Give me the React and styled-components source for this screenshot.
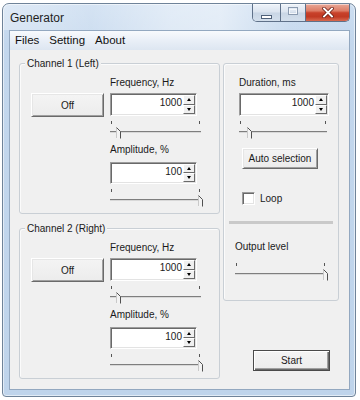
import React from "react";
import styled, { createGlobalStyle } from "styled-components";

const Global = createGlobalStyle`
  html, body { margin: 0; padding: 0; background: #ffffff; }
  body { font-family: "Liberation Sans", Arial, sans-serif; color: #1a1a1a; }
  #root { width: 360px; height: 400px; overflow: hidden; }
  * { box-sizing: border-box; }
`;

const Window = styled.div`
  margin: 3px 0 0 2px;
  width: 354px;
  height: 394px;
  border: 1px solid #6f8399;
  border-radius: 7px 7px 4px 4px;
  background: linear-gradient(180deg, #cddef1 0px, #c3d7ed 40px, #bfd4eb 100%);
  box-shadow: inset 0 0 0 1px rgba(255, 255, 255, 0.55);
  padding: 0 5px 6px 6px;
  display: flex;
  flex-direction: column;
`;

const TitleBar = styled.div`
  margin: 0 -5px 0 -6px;
  height: 26px;
  padding: 0 5px 0 7px;
  border-radius: 6px 6px 0 0;
  display: flex;
  justify-content: space-between;
  align-items: flex-start;
  background: linear-gradient(
    90deg,
    rgba(255, 255, 255, 0.35) 0%,
    rgba(255, 255, 255, 0.15) 25%,
    rgba(255, 255, 255, 0.45) 48%,
    rgba(255, 255, 255, 0.5) 62%,
    rgba(255, 255, 255, 0.05) 82%,
    rgba(255, 255, 255, 0) 100%
  );
`;

const Title = styled.div`
  margin-top: 7px;
  font-size: 12px;
  line-height: 15px;
  color: #1e1e1e;
`;

const WinButtons = styled.div`
  display: flex;
  height: 18px;
  border: 1px solid #5f7189;
  border-top: none;
  border-radius: 0 0 5px 5px;
  overflow: hidden;
`;

const WinBtn = styled.div`
  width: ${(p) => p.$w}px;
  height: 100%;
  display: flex;
  align-items: center;
  justify-content: center;
  border-left: ${(p) => (p.$first ? "none" : "1px solid #5f7189")};
  background: ${(p) =>
    p.$close
      ? "linear-gradient(180deg, #e9a898 0%, #dd7d66 40%, #c8412a 52%, #c13a23 75%, #d8694f 100%)"
      : "linear-gradient(180deg, #eef3f9 0%, #dbe4ef 48%, #c9d6e5 52%, #d3dfec 100%)"};
  box-shadow: inset 0 1px 0 rgba(255, 255, 255, 0.5);
`;

const MinIcon = () => (
  <svg width="12" height="6" viewBox="0 0 12 6" style={{ marginTop: 8 }}>
    <rect x="0.5" y="1.5" width="10" height="3" fill="#ffffff" stroke="#4f6179" />
  </svg>
);

const MaxIcon = () => (
  <svg width="11" height="9" viewBox="0 0 11 9" style={{ marginTop: -2 }}>
    <rect x="0.5" y="0.5" width="9" height="7" fill="none" stroke="#8b9bb0" />
    <rect x="1.5" y="2.5" width="7" height="4" fill="none" stroke="#f4f7fb" />
  </svg>
);

const CloseIcon = () => (
  <svg width="12" height="11" viewBox="0 0 12 11">
    <path d="M2 1.5 L10 9.5 M10 1.5 L2 9.5" stroke="#6b1c12" strokeWidth="3.4" strokeLinecap="square" />
    <path d="M2 1.5 L10 9.5 M10 1.5 L2 9.5" stroke="#ffffff" strokeWidth="1.9" strokeLinecap="square" />
  </svg>
);

const Client = styled.div`
  flex: 1;
  display: flex;
  flex-direction: column;
  border: 1px solid #93a8c0;
  background: #f0f0f0;
`;

const MenuBar = styled.div`
  height: 19px;
  display: flex;
  align-items: center;
  background: linear-gradient(180deg, #f8fafd 0%, #e9eff7 50%, #dde6f1 100%);
`;

const MenuItem = styled.span`
  padding: 0 5px;
  font-size: 11.5px;
  line-height: 15px;
  color: #111;
`;

const Body = styled.div`
  padding: 13px 0 0 9px;
  display: grid;
  grid-template-columns: 201px 116px;
  column-gap: 3px;
  align-items: start;
`;

const Column = styled.div`
  display: flex;
  flex-direction: column;
  align-items: flex-start;
  gap: ${(p) => p.$gap || 0}px;
`;

const Group = styled.div`
  position: relative;
  width: 100%;
  height: ${(p) => p.$h}px;
  border: 1px solid #c9cfd5;
  border-radius: 3px;
  box-shadow: inset 1px 1px 0 rgba(255, 255, 255, 0.7);
`;

const GroupLabel = styled.span`
  position: absolute;
  top: -7px;
  left: 5px;
  padding: 0 2px;
  background: #f0f0f0;
  font-size: 10px;
  line-height: 13px;
`;

const ChannelGroup = styled(Group)`
  display: flex;
  align-items: flex-start;
  gap: 6px;
  padding: 12px 0 0 11px;
`;

const RightGroup = styled(Group)`
  display: flex;
  flex-direction: column;
  align-items: flex-start;
`;

const Section = styled.div`
  display: flex;
  flex-direction: column;
  align-items: flex-start;
  margin: ${(p) => p.$mt || 0}px 0 0 ${(p) => p.$ml || 0}px;
`;

const FieldLabel = styled.div`
  font-size: 10px;
  line-height: 13px;
  height: 13px;
  margin: ${(p) => p.$mt || 0}px 0 ${(p) => p.$mb || 0}px 0;
  white-space: nowrap;
`;

const Button = styled.div`
  width: ${(p) => p.$w}px;
  height: ${(p) => p.$h}px;
  margin: ${(p) => p.$m || "0"};
  display: flex;
  align-items: center;
  justify-content: center;
  font-size: 10px;
  line-height: 13px;
  background: linear-gradient(180deg, #f4f4f4 0%, #ececec 100%);
  border: 1px solid;
  border-color: ${(p) => (p.$default ? "#4a4a4a" : "#ffffff #6a6a6a #6a6a6a #ffffff")};
  box-shadow: ${(p) =>
    p.$default
      ? "inset 1px 1px 0 #ffffff, inset -1px -1px 0 #6a6a6a, inset -2px -2px 0 #a0a0a0"
      : "inset 1px 1px 0 #e6e6e6, inset -1px -1px 0 #a0a0a0"};
  white-space: nowrap;
`;

const SpinBox = styled.div`
  width: ${(p) => p.$w}px;
  height: ${(p) => p.$h}px;
  display: flex;
  background: #ffffff;
  border: 1px solid;
  border-color: #9c9c9c #ffffff #ffffff #9c9c9c;
  box-shadow: inset 1px 1px 0 #696969, inset -1px -1px 0 #e3e3e3;
`;

const SpinText = styled.div`
  flex: 1;
  text-align: right;
  padding: 2px 1px 0 0;
  font-size: 10px;
  line-height: 13px;
`;

const SpinButtons = styled.div`
  width: 13px;
  display: flex;
  flex-direction: column;
  padding: 1px 1px 1px 0;
`;

const SpinBtn = styled.div`
  flex: 1;
  display: flex;
  align-items: center;
  justify-content: center;
  background: #f0f0f0;
  border: 1px solid;
  border-color: #ffffff #6a6a6a #6a6a6a #ffffff;
`;

const Arrow = styled.span`
  width: 0;
  height: 0;
  border-left: 2.5px solid transparent;
  border-right: 2.5px solid transparent;
  ${(p) => (p.$up ? "border-bottom: 3px solid #000;" : "border-top: 3px solid #000;")}
`;

const SliderWrap = styled.div`
  position: relative;
  width: ${(p) => p.$w}px;
  height: 22px;
`;

const TickRow = styled.div`
  display: flex;
  justify-content: space-between;
  margin-top: 5px;
  padding: 0 3px 0 1px;
  height: 3px;
`;

const Tick = styled.span`
  width: 1px;
  height: 3px;
  background: #555;
`;

const Track = styled.div`
  margin-top: 7px;
  width: calc(100% - 2px);
  height: 2px;
  border-top: 1px solid #7e7e7e;
  border-bottom: 1px solid #d8d8d8;
`;

const ThumbBox = styled.div`
  position: absolute;
  top: 9px;
  width: 6px;
  height: 12px;
`;

const Thumb = ({ left }) => (
  <ThumbBox style={{ left }}>
    <svg width="6" height="12" viewBox="0 0 6 12">
      <path d="M0.5 0.5 L4.5 4.5 L4.5 11.5 L0.5 11.5 Z" fill="#f3f3f3" />
      <path d="M0.5 0.5 L4.5 4.5 L4.5 11.5" fill="none" stroke="#505050" strokeWidth="1" />
      <path d="M0.5 1 L0.5 11" stroke="#c9c9c9" strokeWidth="1" />
    </svg>
  </ThumbBox>
);

const Slider = ({ w, value, min, max }) => {
  const left = Math.round(((value - min) / (max - min)) * (w - 5));
  return (
    <SliderWrap $w={w}>
      <TickRow>
        <Tick />
        <Tick />
      </TickRow>
      <Track />
      <Thumb left={left} />
    </SliderWrap>
  );
};

const Spin = ({ w, h, value }) => (
  <SpinBox $w={w} $h={h}>
    <SpinText>{value}</SpinText>
    <SpinButtons>
      <SpinBtn>
        <Arrow $up />
      </SpinBtn>
      <SpinBtn>
        <Arrow />
      </SpinBtn>
    </SpinButtons>
  </SpinBox>
);

const CheckRow = styled.div`
  display: flex;
  align-items: center;
  gap: 5px;
  margin: ${(p) => p.$mt}px 0 0 ${(p) => p.$ml}px;
  font-size: 10px;
  line-height: 13px;
`;

const CheckBox = styled.span`
  width: 13px;
  height: 13px;
  background: #ffffff;
  border: 1px solid;
  border-color: #9c9c9c #ffffff #ffffff #9c9c9c;
  box-shadow: inset 1px 1px 0 #696969, inset -1px -1px 0 #e3e3e3;
`;

const Separator = styled.div`
  width: 104px;
  height: 3px;
  margin: 16px 0 0 5px;
  background: #c9c9c9;
`;

const Channel = ({ label }) => (
  <ChannelGroup $h={151}>
    <GroupLabel>{label}</GroupLabel>
    <Button $w={73} $h={24} $m="17px 0 0 0">
      Off
    </Button>
    <Column>
      <FieldLabel $mb={4}>Frequency, Hz</FieldLabel>
      <Spin w={87} h={23} value="1000" />
      <Slider w={93} value={1000} min={0} max={16000} />
      <FieldLabel $mt={5} $mb={6}>
        Amplitude, %
      </FieldLabel>
      <Spin w={87} h={22} value="100" />
      <Slider w={93} value={100} min={0} max={100} />
    </Column>
  </ChannelGroup>
);

export default function App() {
  return (
    <>
      <Global />
      <Window>
        <TitleBar>
          <Title>Generator</Title>
          <WinButtons>
            <WinBtn $w={27} $first>
              <MinIcon />
            </WinBtn>
            <WinBtn $w={25}>
              <MaxIcon />
            </WinBtn>
            <WinBtn $w={44} $close>
              <CloseIcon />
            </WinBtn>
          </WinButtons>
        </TitleBar>
        <Client>
          <MenuBar>
            <MenuItem>Files</MenuItem>
            <MenuItem>Setting</MenuItem>
            <MenuItem>About</MenuItem>
          </MenuBar>
          <Body>
            <Column $gap={14}>
              <Channel label="Channel 1 (Left)" />
              <Channel label="Channel 2 (Right)" />
            </Column>
            <Column>
              <RightGroup $h={238}>
                <Section $mt={12} $ml={15}>
                  <FieldLabel $mb={4}>Duration, ms</FieldLabel>
                  <Spin w={90} h={23} value="1000" />
                  <Slider w={90} value={1000} min={100} max={10000} />
                </Section>
                <Button $w={76} $h={21} $m="10px 0 0 18px">
                  Auto selection
                </Button>
                <CheckRow $mt={23} $ml={18}>
                  <CheckBox />
                  Loop
                </CheckRow>
                <Separator />
                <Section $mt={16} $ml={11}>
                  <FieldLabel $mb={5}>Output level</FieldLabel>
                  <Slider w={93} value={100} min={0} max={100} />
                </Section>
              </RightGroup>
              <Button $w={77} $h={21} $m="49px 0 0 30px" $default>
                Start
              </Button>
            </Column>
          </Body>
        </Client>
      </Window>
    </>
  );
}
